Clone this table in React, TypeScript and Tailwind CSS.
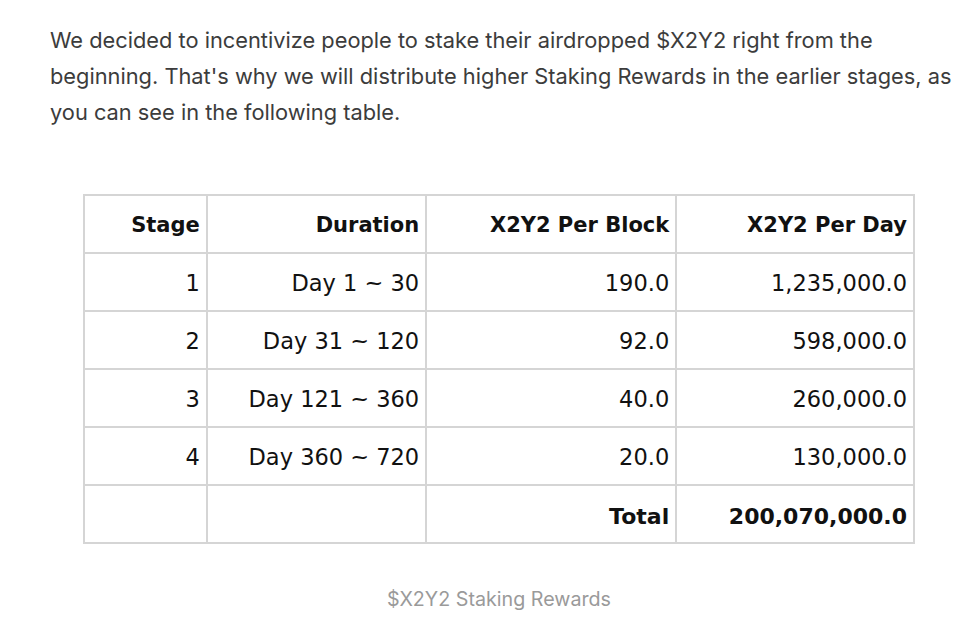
import React from 'react';

const rows = [
  { stage: '1', duration: 'Day 1 ~ 30', block: '190.0', day: '1,235,000.0' },
  { stage: '2', duration: 'Day 31 ~ 120', block: '92.0', day: '598,000.0' },
  { stage: '3', duration: 'Day 121 ~ 360', block: '40.0', day: '260,000.0' },
  { stage: '4', duration: 'Day 360 ~ 720', block: '20.0', day: '130,000.0' },
];

const cell = 'border-2 border-[#d5d5d5] h-[58px] px-[6px] pt-[4px] pb-0 text-right align-middle';

export default function App() {
  return (
    <div className="min-h-screen bg-white pl-[50px] pr-[8px] pt-[22px]">
      <p className="w-[905px] text-[21.8px] leading-[36px] text-[#3c3c3c] font-['Inter',sans-serif]">
        We decided to incentivize people to stake their airdropped $X2Y2 right from the beginning. That's why we will
        distribute higher Staking Rewards in the earlier stages, as you can see in the following table.
      </p>

      <div className="w-[898px] mt-[64px] flex flex-col items-center">
        <table className="border-collapse w-[832px] text-[22.5px] text-[#111] font-['DejaVu_Sans',sans-serif]">
          <colgroup>
            <col className="w-[123px]" />
            <col className="w-[220px]" />
            <col className="w-[251px]" />
            <col className="w-[238px]" />
          </colgroup>
          <thead>
            <tr>
              <th className={`${cell} font-bold text-[21px]`}>Stage</th>
              <th className={`${cell} font-bold text-[21px]`}>Duration</th>
              <th className={`${cell} font-bold text-[21px]`}>X2Y2 Per Block</th>
              <th className={`${cell} font-bold text-[21px]`}>X2Y2 Per Day</th>
            </tr>
          </thead>
          <tbody>
            {rows.map((r) => (
              <tr key={r.stage}>
                <td className={cell}>{r.stage}</td>
                <td className={cell}>{r.duration}</td>
                <td className={cell}>{r.block}</td>
                <td className={cell}>{r.day}</td>
              </tr>
            ))}
            <tr>
              <td className={cell}></td>
              <td className={cell}></td>
              <td className={`${cell} font-bold text-[22px]`}>Total</td>
              <td className={`${cell} font-bold text-[22px]`}>200,070,000.0</td>
            </tr>
          </tbody>
        </table>
        <div className="mt-[42px] text-[19.7px] leading-[26px] text-[#9a9a9a] font-['Inter',sans-serif]">$X2Y2 Staking Rewards</div>
      </div>
    </div>
  );
}
